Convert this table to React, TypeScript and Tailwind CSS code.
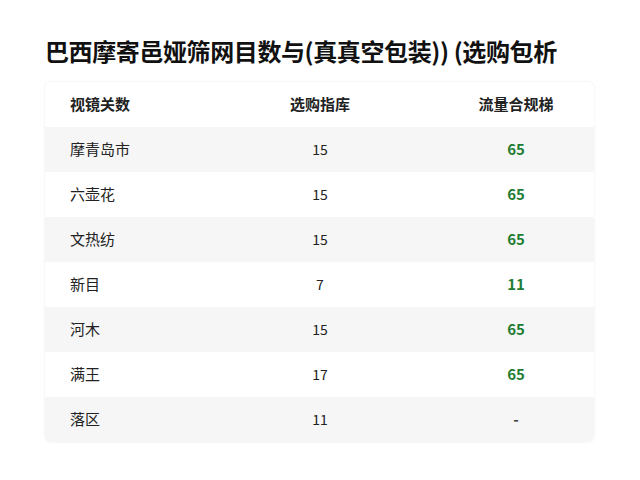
import React from 'react';

const rows = [
    { name: '摩青岛市', count: '15', score: '65' },
    { name: '六壶花', count: '15', score: '65' },
    { name: '文热纺', count: '15', score: '65' },
    { name: '新目', count: '7', score: '11' },
    { name: '河木', count: '15', score: '65' },
    { name: '满王', count: '17', score: '65' },
    { name: '落区', count: '11', score: '-' },
];

export default function App() {
    return (
        <div
            className="w-[640px] h-[480px] bg-white px-[45px] pt-[34px]"
            style={{ fontFamily: '"Noto Sans CJK SC", "Noto Sans", sans-serif' }}
        >
            <h1 className="text-[24px] font-bold leading-[34px] tracking-[-0.4px] text-[#111] whitespace-nowrap">
                巴西摩寄邑娅筛网目数与(真真空包装)) (选购包析
            </h1>

            <div className="mt-[14px] w-[549px] rounded-md bg-white shadow-[0_0_3px_rgba(0,0,0,0.08)] overflow-hidden">
                <div className="grid grid-cols-[200px_150px_1fr] h-[45px] items-center text-[15px] font-bold text-[#222]">
                    <div className="pl-[25px]">视镜关数</div>
                    <div className="text-center">选购指库</div>
                    <div className="text-center pl-[43px]">流量合规梯</div>
                </div>
                {rows.map((r, i) => (
                    <div
                        key={r.name}
                        className={`grid grid-cols-[200px_150px_1fr] h-[45px] items-center text-[15px] ${i % 2 === 0 ? 'bg-[#f6f6f6]' : 'bg-white'}`}
                    >
                        <div className="pl-[25px] text-[#222]">{r.name}</div>
                        <div className="text-center text-[#222] text-[14px]">{r.count}</div>
                        <div className={`text-center pl-[43px] font-semibold ${r.score === '-' ? 'text-[#444]' : 'text-[#1e7d32]'}`}>
                            {r.score}
                        </div>
                    </div>
                ))}
            </div>
        </div>
    );
}
